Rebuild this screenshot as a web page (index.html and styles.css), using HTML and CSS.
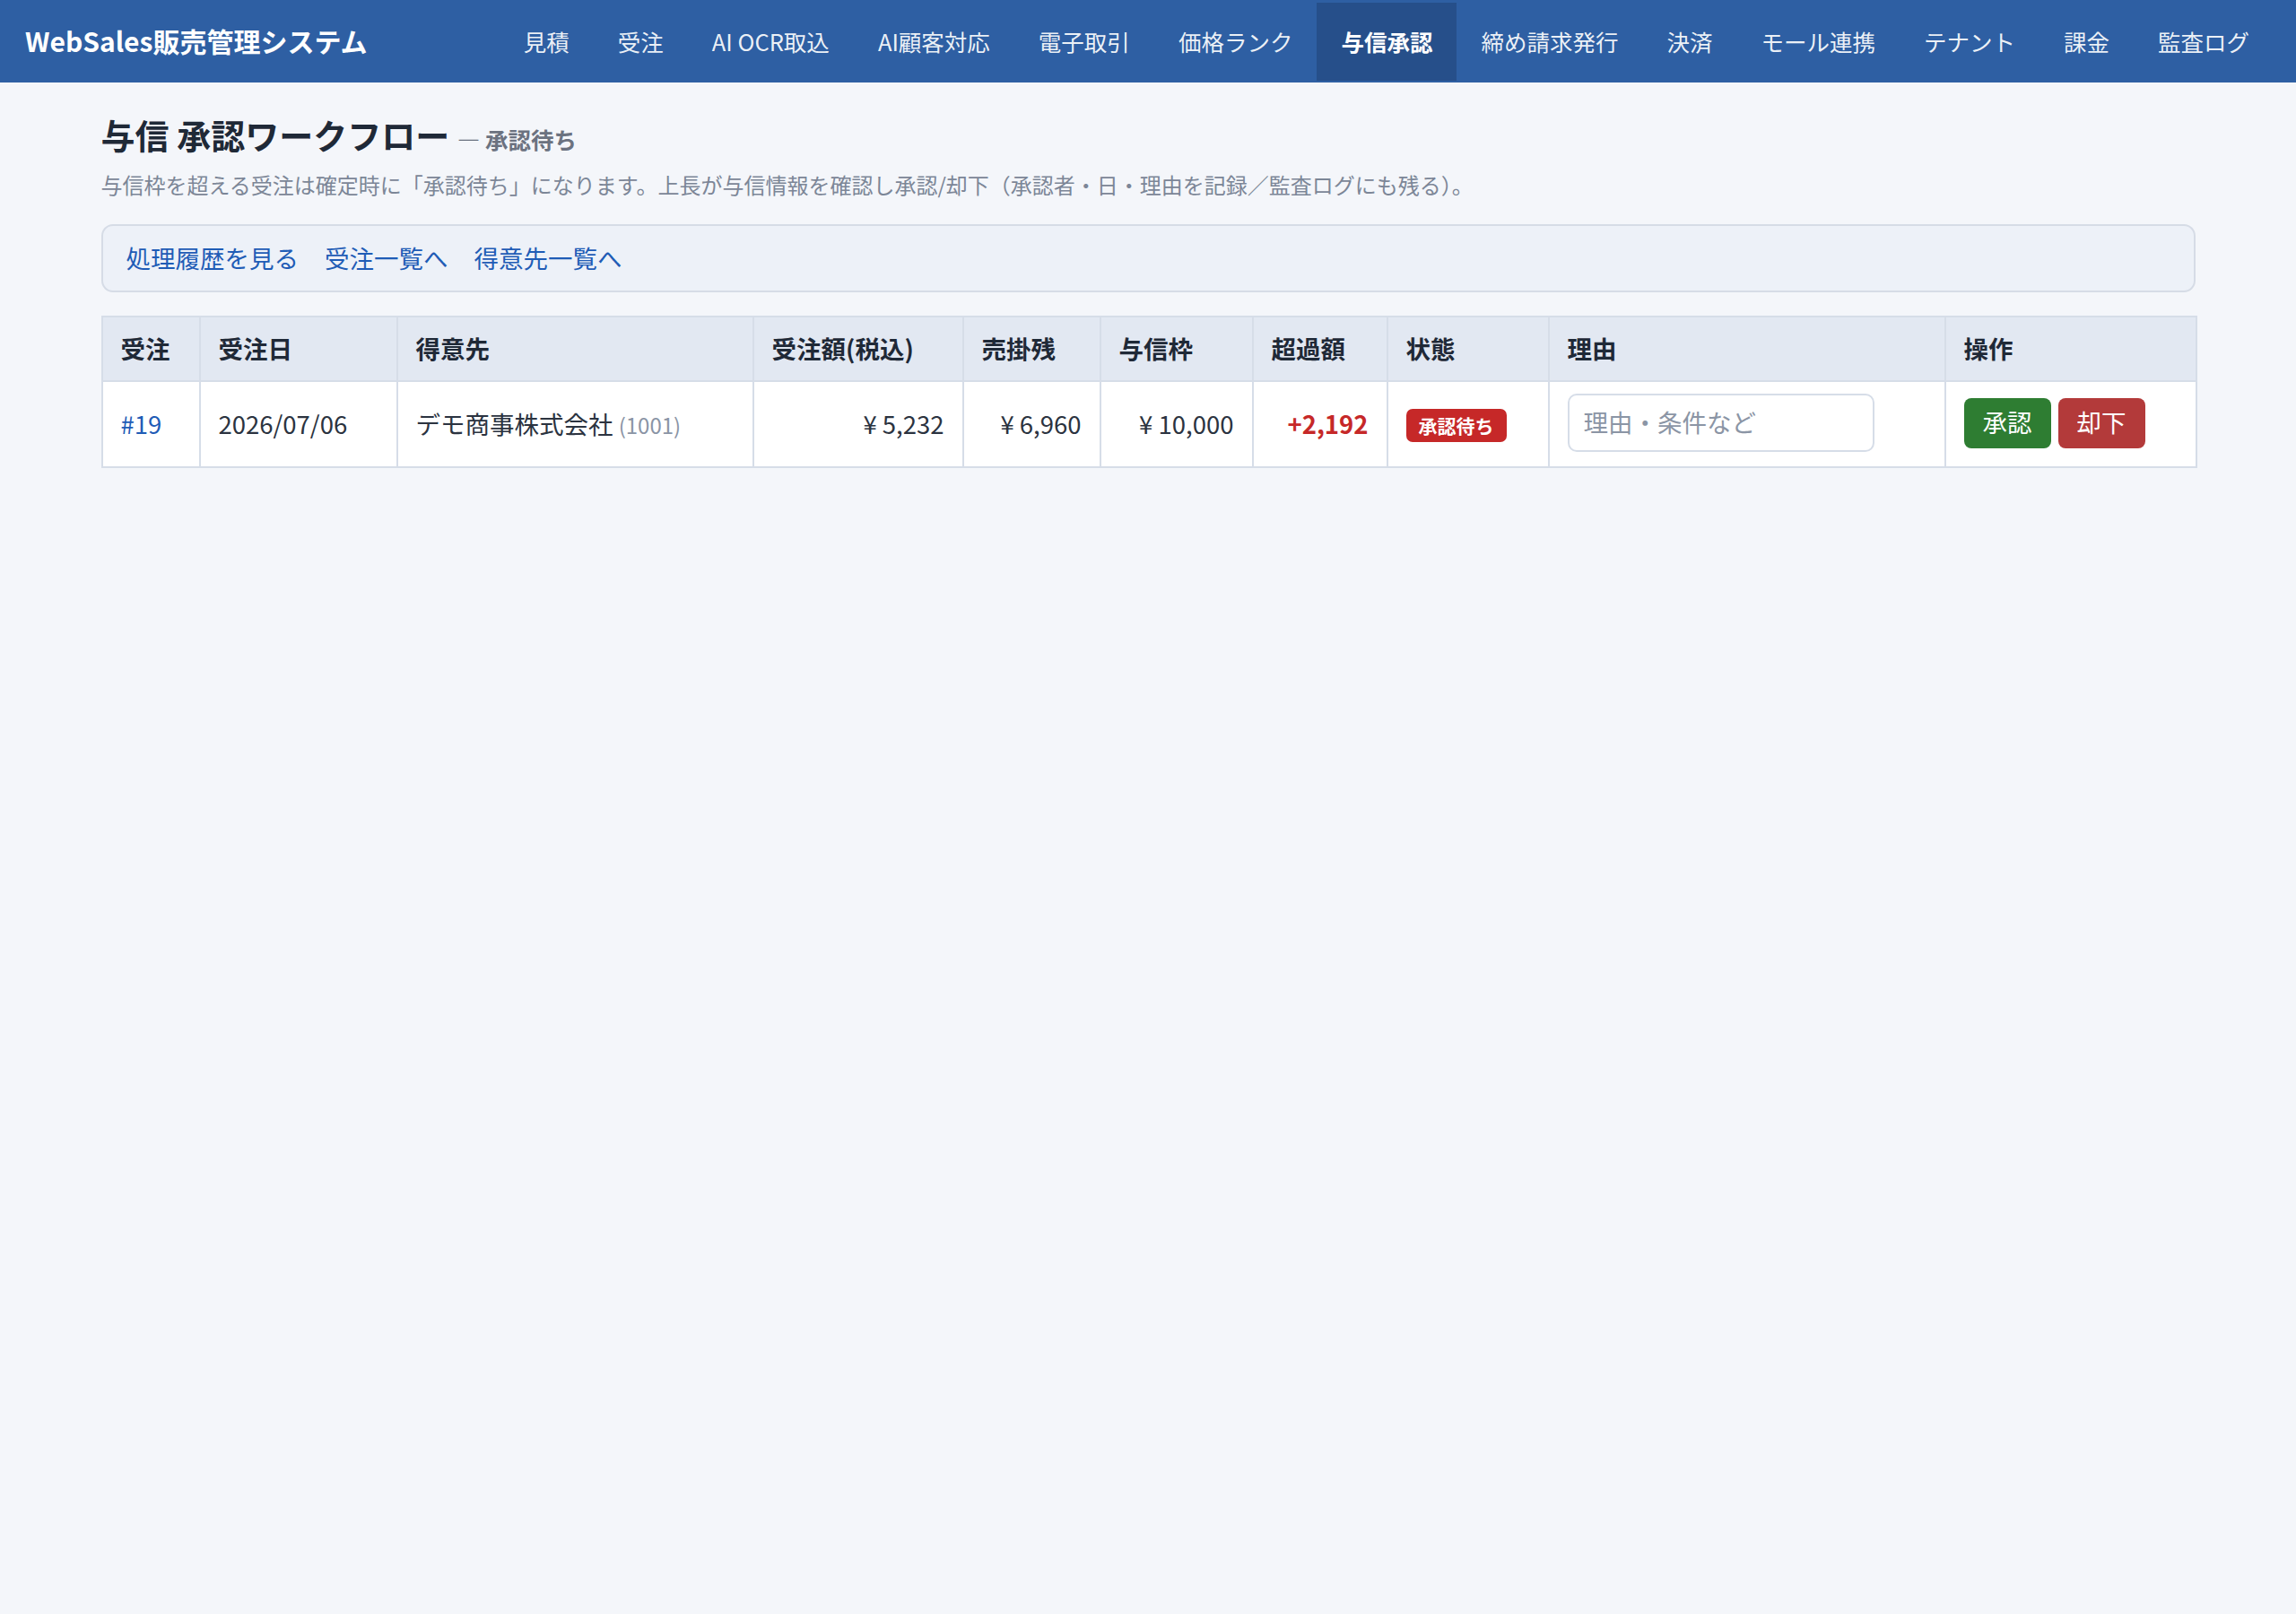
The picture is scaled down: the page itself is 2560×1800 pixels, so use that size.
FILE: index.html
```html
<!DOCTYPE html>
<html lang="ja">
<head>
<meta charset="utf-8">
<title>与信承認 - WebSales販売管理システム</title>
<link rel="stylesheet" href="styles.css">
</head>
<body>
<header class="navbar">
  <div class="brand">WebSales販売管理システム</div>
  <nav class="nav">
    <a href="#">見積</a>
    <a href="#">受注</a>
    <a href="#">AI OCR取込</a>
    <a href="#">AI顧客対応</a>
    <a href="#">電子取引</a>
    <a href="#">価格ランク</a>
    <a href="#" class="active">与信承認</a>
    <a href="#">締め請求発行</a>
    <a href="#">決済</a>
    <a href="#">モール連携</a>
    <a href="#">テナント</a>
    <a href="#">課金</a>
    <a href="#">監査ログ</a>
  </nav>
</header>
<main class="container">
  <h1 class="title">与信 承認ワークフロー <span class="sub">— 承認待ち</span></h1>
  <p class="desc">与信枠を超える受注は確定時に「承認待ち」になります。上長が与信情報を確認し承認/却下（承認者・日・理由を記録／監査ログにも残る）。</p>
  <div class="linkbox">
    <a href="#">処理履歴を見る</a>
    <a href="#">受注一覧へ</a>
    <a href="#">得意先一覧へ</a>
  </div>
  <table class="grid">
    <colgroup>
      <col class="w1"><col class="w2"><col class="w3"><col class="w4"><col class="w5">
      <col class="w6"><col class="w7"><col class="w8"><col class="w9"><col class="w10">
    </colgroup>
    <thead>
      <tr>
        <th>受注</th><th>受注日</th><th>得意先</th><th>受注額(税込)</th><th>売掛残</th>
        <th>与信枠</th><th>超過額</th><th>状態</th><th>理由</th><th>操作</th>
      </tr>
    </thead>
    <tbody>
      <tr>
        <td><a href="#" class="order">#19</a></td>
        <td>2026/07/06</td>
        <td>デモ商事株式会社 <span class="code">(1001)</span></td>
        <td class="num">¥ 5,232</td>
        <td class="num">¥ 6,960</td>
        <td class="num">¥ 10,000</td>
        <td class="num over">+2,192</td>
        <td><span class="badge">承認待ち</span></td>
        <td><input class="reason" type="text" placeholder="理由・条件など"></td>
        <td><div class="actions"><button class="btn ok">承認</button><button class="btn ng">却下</button></div></td>
      </tr>
    </tbody>
  </table>
</main>
</body>
</html>
```
FILE: styles.css
```css
* { box-sizing: border-box; }
body {
  margin: 0;
  background: #f4f6fa;
  font-family: "Noto Sans CJK JP", "Noto Sans", sans-serif;
  color: #1f2937;
}
a { text-decoration: none; }

.navbar {
  display: flex;
  align-items: center;
  height: 92px;
  background: #2e5fa3;
  padding: 0 25px 0 28px;
}
.brand {
  color: #fff;
  font-weight: 700;
  font-size: 30px;
  margin-right: auto;
  padding-bottom: 3px;
}
.nav {
  display: flex;
  height: 87px;
  margin-top: 1px;
}
.nav a {
  display: flex;
  align-items: center;
  padding: 0 27px 3px;
  font-size: 25.5px;
  color: rgba(255,255,255,0.92);
}
.nav a.active {
  background: #264f8a;
  color: #fff;
  font-weight: 700;
}

.container {
  max-width: 2335px;
  margin: 0 auto;
  padding-top: 34px;
}
.title {
  margin: 0;
  font-size: 38px;
  line-height: 48px;
  font-weight: 700;
  color: #1f2937;
}
.title .sub {
  font-size: 25.5px;
  color: #6b7280;
  font-weight: 700;
}
.desc {
  margin: 9px 0 0;
  font-size: 24px;
  line-height: 36px;
  color: #7c8697;
}
.linkbox {
  margin-top: 26px;
  height: 76px;
  display: flex;
  align-items: center;
  gap: 29px;
  padding: 0 26px 3px;
  background: #edf1f8;
  border: 2px solid #d6dce6;
  border-radius: 13px;
}
.linkbox a {
  font-size: 27.5px;
  color: #1f5cb6;
}

.grid {
  margin-top: 26px;
  width: 100%;
  border-collapse: collapse;
  table-layout: fixed;
  background: #fff;
}
.w1 { width: 109px; }
.w2 { width: 220px; }
.w3 { width: 397px; }
.w4 { width: 234px; }
.w5 { width: 153px; }
.w6 { width: 170px; }
.w7 { width: 150px; }
.w8 { width: 180px; }
.w9 { width: 442px; }
.w10 { width: 280px; }

.grid th, .grid td {
  border: 2px solid #d6dde8;
  padding: 0 20px;
  font-size: 27.5px;
  white-space: nowrap;
}
.grid th {
  height: 72px;
  background: #e2e8f2;
  text-align: left;
  font-weight: 700;
  color: #1f2937;
  padding-bottom: 2px;
}
.grid td {
  height: 96px;
  color: #2b3340;
  padding-bottom: 3px;
}
.grid td.num { text-align: right; }
.grid td.over { color: #c62828; font-weight: 700; }
.order { color: #1f5cb6; }
.code { font-size: 24px; color: #8a94a5; }

.badge {
  display: inline-block;
  background: #c62828;
  color: #fff;
  font-weight: 700;
  font-size: 21px;
  line-height: 37px;
  height: 37px;
  padding: 0 14px;
  border-radius: 7px;
}
.reason {
  width: 342px;
  height: 65px;
  border: 2px solid #d6dde8;
  border-radius: 10px;
  padding: 0 16px 3px;
  font-family: inherit;
  font-size: 27.5px;
  color: #2b3340;
  background: #fff;
}
.reason::placeholder { color: #8b95a5; }
.actions { display: flex; gap: 8px; }
.btn {
  height: 56px;
  padding: 0 21px 3px;
  border: 0;
  border-radius: 8px;
  font-family: inherit;
  font-size: 27.5px;
  color: #fff;
}
.btn.ok { background: #2e7d32; }
.btn.ng { background: #b33a3a; }
```
